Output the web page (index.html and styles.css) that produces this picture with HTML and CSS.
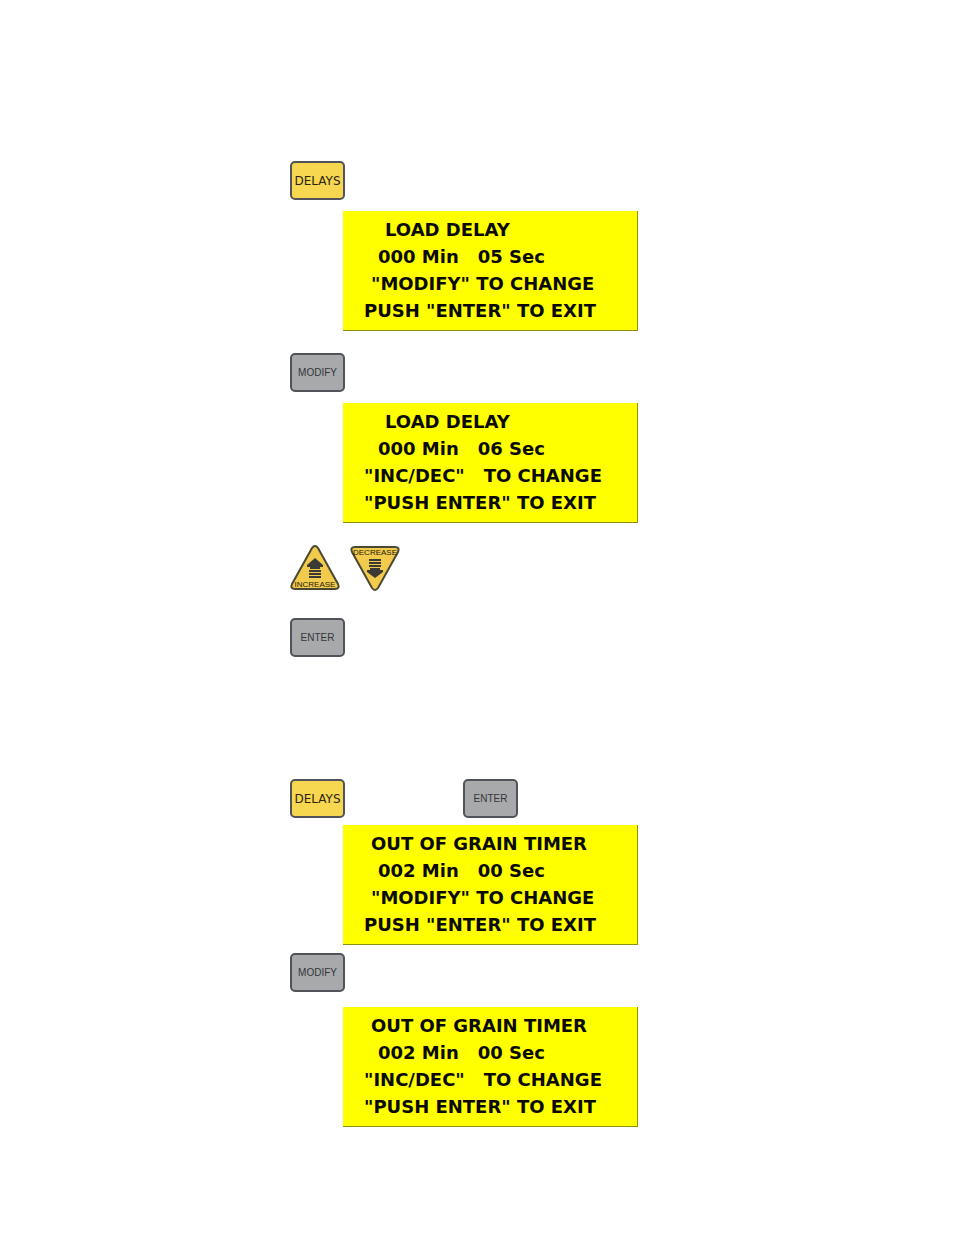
FILE: index.html
```
<!DOCTYPE html>
<html lang="en">
<head>
    <meta charset="UTF-8">
    <meta name="viewport" content="width=device-width, initial-scale=1.0">
    <title>Delays</title>
    <link rel="stylesheet" href="styles.css">
</head>
<body>
    <main>
        <section class="load-delay">
            <div class="keys">
                <button class="key yellow">DELAYS</button>
            </div>
            <div class="screen">
                <p class="in3">LOAD DELAY</p>
                <p class="in2 split"><span>000 Min</span><span>05 Sec</span></p>
                <p class="in1">"MODIFY" TO CHANGE</p>
                <p>PUSH "ENTER" TO EXIT</p>
            </div>
            <div class="keys spaced">
                <button class="key">MODIFY</button>
            </div>
            <div class="screen">
                <p class="in3">LOAD DELAY</p>
                <p class="in2 split"><span>000 Min</span><span>06 Sec</span></p>
                <p class="split"><span>"INC/DEC"</span><span>TO CHANGE</span></p>
                <p>"PUSH ENTER" TO EXIT</p>
            </div>
            <div class="keys arrows">
                <button class="arrow" aria-label="Increase">
                    <svg width="50" height="46" viewBox="0 0 50 46">
                        <path class="tri" d="M22 3Q25 -1 28 3L48 39Q50 44 45 44H5Q0 44 2 39Z"/>
                        <path class="mark" d="M25 13L33 20V22H30V24H20V22H17V20Z"/>
                        <path class="bars" d="M19 26H31M19 29H31M19 32H31"/>
                        <text x="25" y="42">INCREASE</text>
                    </svg>
                </button>
                <button class="arrow" aria-label="Decrease">
                    <svg width="50" height="46" viewBox="0 0 50 46">
                        <path class="tri" d="M22 43Q25 47 28 43L48 7Q50 2 45 2H5Q0 2 2 7Z"/>
                        <path class="mark" d="M25 33L33 27V25H30V23H20V25H17V27Z"/>
                        <path class="bars" d="M19 15H31M19 18H31M19 21H31"/>
                        <text x="25" y="10">DECREASE</text>
                    </svg>
                </button>
            </div>
            <div class="keys last">
                <button class="key">ENTER</button>
            </div>
        </section>

        <section class="grain-timer">
            <div class="keys">
                <button class="key yellow">DELAYS</button>
                <button class="key">ENTER</button>
            </div>
            <div class="screen">
                <p class="in1">OUT OF GRAIN TIMER</p>
                <p class="in2 split"><span>002 Min</span><span>00 Sec</span></p>
                <p class="in1">"MODIFY" TO CHANGE</p>
                <p>PUSH "ENTER" TO EXIT</p>
            </div>
            <div class="keys">
                <button class="key">MODIFY</button>
            </div>
            <div class="screen">
                <p class="in1">OUT OF GRAIN TIMER</p>
                <p class="in2 split"><span>002 Min</span><span>00 Sec</span></p>
                <p class="split"><span>"INC/DEC"</span><span>TO CHANGE</span></p>
                <p>"PUSH ENTER" TO EXIT</p>
            </div>
        </section>
    </main>
</body>
</html>
```
FILE: styles.css
```
body {
    margin: 0;
    background: #fff;
    color: #111;
    font-family: "Liberation Sans", Arial, sans-serif;
}
main {
    padding: 161px 20px 108px 290px;
}
.keys {
    display: flex;
    margin-bottom: 11px;
}
.keys.spaced {
    margin-top: 22px;
}
.key {
    box-sizing: border-box;
    width: 55px;
    height: 39px;
    padding: 0;
    border: 2px solid #50545a;
    border-radius: 5px;
    background: #a8a9ab;
    color: #34363a;
    font-family: inherit;
    font-size: 10px;
}
.key.yellow {
    background: #f8d750;
    color: #2b2410;
    font-family: "DejaVu Sans", sans-serif;
    font-size: 12px;
}
.screen {
    box-sizing: border-box;
    max-width: 295px;
    margin-left: 53px;
    padding: 5px 0 6px 21px;
    border: solid #8d9410;
    border-width: 0 1px 1px 0;
    background: #ff0;
    color: #0a0a00;
    font-family: "DejaVu Sans", Verdana, sans-serif;
    font-size: 18px;
    font-weight: bold;
    line-height: 27px;
    white-space: nowrap;
}
.screen p {
    margin: 0;
}
.screen .in1 {
    padding-left: 7px;
}
.screen .in2 {
    padding-left: 14px;
}
.screen .in3 {
    padding-left: 21px;
}
.split {
    display: flex;
    gap: 19px;
}
.arrows {
    gap: 10px;
    margin: 22px 0 27px;
}
.arrow {
    padding: 0;
    border: none;
    background: none;
}
.arrow svg {
    display: block;
}
.tri {
    fill: #f3cb4c;
    stroke: #4a4834;
    stroke-width: 2;
}
.mark {
    fill: #3b3a36;
}
.bars {
    stroke: #3b3a36;
    stroke-width: 2;
}
.arrow text {
    fill: #1c1808;
    font-family: "Liberation Sans", Arial, sans-serif;
    font-size: 8px;
    text-anchor: middle;
}
.keys.last {
    margin-bottom: 0;
}
.grain-timer {
    margin-top: 122px;
}
.grain-timer .keys {
    gap: 118px;
    margin-bottom: 7px;
}
.grain-timer .screen + .keys {
    margin: 8px 0 15px;
}
```
